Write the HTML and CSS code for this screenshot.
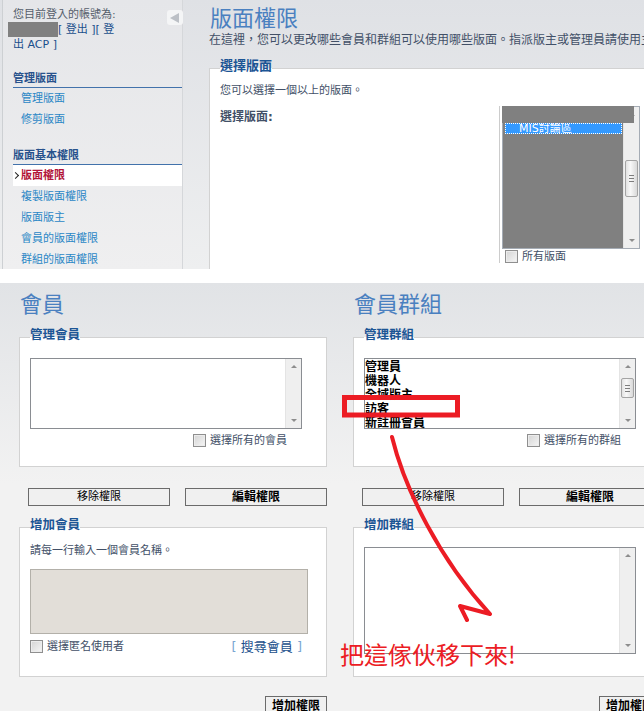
FILE: index.html
```html
<!DOCTYPE html>
<html lang="zh-Hant">
<head>
    <meta charset="UTF-8">
    <meta name="viewport" content="width=device-width, initial-scale=1.0">
    <title>版面權限</title>
    <link rel="stylesheet" href="styles.css">
</head>
<body>
    <!-- Forum permissions: pick forums -->
    <div class="shot shot-acp">
        <div class="menu">
            <span class="menu-toggle"></span>
            <div class="menu-user">
                <p>您目前登入的帳號為:</p>
                <p><span class="redacted user-name"></span><a href="#">[ 登出 ]</a><a href="#">[ 登出 ACP ]</a></p>
            </div>

            <div class="menu-block">
                <h3>管理版面</h3>
                <ul>
                    <li><a href="#">管理版面</a></li>
                    <li><a href="#">修剪版面</a></li>
                </ul>
            </div>

            <div class="menu-block">
                <h3>版面基本權限</h3>
                <ul>
                    <li class="active"><a href="#">版面權限</a></li>
                    <li><a href="#">複製版面權限</a></li>
                    <li><a href="#">版面版主</a></li>
                    <li><a href="#">會員的版面權限</a></li>
                    <li><a href="#">群組的版面權限</a></li>
                </ul>
            </div>
        </div>

        <div class="menu-gap"></div>

        <div class="main">
            <h1>版面權限</h1>
            <p class="explain">在這裡，您可以更改哪些會員和群組可以使用哪些版面。指派版主或管理員請使用主要的權限頁面。</p>

            <fieldset class="box box-forum">
                <legend>選擇版面</legend>
                <p>您可以選擇一個以上的版面。</p>
                <dl>
                    <dt>選擇版面:</dt>
                    <dd>
                        <div class="select-forum">
                            <div class="select-list">
                                <div class="option selected">MIS討論區</div>
                            </div>
                            <div class="scrollbar">
                                <span class="arrow up"></span>
                                <span class="thumb forum-thumb"><i></i><i></i><i></i></span>
                                <span class="arrow down"></span>
                            </div>
                            <span class="redacted select-cover"></span>
                        </div>
                        <label class="check forum-all"><span class="checkbox"></span>所有版面</label>
                    </dd>
                </dl>
            </fieldset>
        </div>
    </div>

    <!-- Forum permissions: users and groups -->
    <div class="shot shot-perm">
        <div class="perm-grid">
            <h2>會員</h2>
            <h2>會員群組</h2>

            <fieldset class="box">
                <legend>管理會員</legend>
                <div class="listbox">
                    <ul class="listbox-items"></ul>
                    <div class="scrollbar">
                        <span class="arrow up"></span>
                        <span class="arrow down"></span>
                    </div>
                </div>
                <div class="check-row">
                    <label class="check"><span class="checkbox"></span>選擇所有的會員</label>
                </div>
            </fieldset>

            <fieldset class="box">
                <legend>管理群組</legend>
                <div class="listbox">
                    <ul class="listbox-items group-list">
                        <li>管理員</li>
                        <li>機器人</li>
                        <li>全域版主</li>
                        <li>訪客</li>
                        <li>新註冊會員</li>
                    </ul>
                    <div class="scrollbar">
                        <span class="arrow up"></span>
                        <span class="thumb group-thumb"><i></i><i></i><i></i></span>
                        <span class="arrow down"></span>
                    </div>
                </div>
                <div class="check-row">
                    <label class="check"><span class="checkbox"></span>選擇所有的群組</label>
                </div>
            </fieldset>

            <div class="button-row">
                <button class="button">移除權限</button>
                <button class="button strong">編輯權限</button>
            </div>
            <div class="button-row">
                <button class="button">移除權限</button>
                <button class="button strong">編輯權限</button>
            </div>

            <fieldset class="box">
                <legend>增加會員</legend>
                <p class="hint">請每一行輸入一個會員名稱。</p>
                <div class="textarea"></div>
                <div class="add-row">
                    <label class="check"><span class="checkbox"></span>選擇匿名使用者</label>
                    <a class="find-user" href="#"><span>[</span> 搜尋會員 <span>]</span></a>
                </div>
            </fieldset>

            <fieldset class="box">
                <legend>增加群組</legend>
                <div class="listbox listbox-tall">
                    <ul class="listbox-items"></ul>
                    <div class="scrollbar">
                        <span class="arrow up"></span>
                        <span class="arrow down"></span>
                    </div>
                </div>
            </fieldset>

            <div class="submit-row"><button class="button strong">增加權限</button></div>
            <div class="submit-row"><button class="button strong">增加權限</button></div>
        </div>
    </div>

    <!-- hand-drawn note on top -->
    <svg class="markup" width="644" height="711" viewBox="0 0 644 711">
        <rect x="344.5" y="397.5" width="113" height="17.5" fill="none" stroke="#ec1c24" stroke-width="5"/>
        <path d="M392 437 C405 490 440 560 490 614 L460 606 L467 620" fill="none" stroke="#ec1c24" stroke-width="4" stroke-linecap="round" stroke-linejoin="round"/>
    </svg>
    <p class="markup-note">把這傢伙移下來!</p>
</body>
</html>
```

FILE: styles.css
```css
* {
    box-sizing: border-box;
}

body {
    margin: 0;
    width: 644px;
    height: 711px;
    overflow: hidden;
    position: relative;
    background: #ffffff;
    font-family: "DejaVu Sans", "Noto Sans CJK TC", sans-serif;
    font-size: 11px;
    color: #425067;
}

p, h1, h2, h3, ul, dl, dd {
    margin: 0;
    padding: 0;
}

ul {
    list-style: none;
}

a {
    text-decoration: none;
}

.redacted {
    background: #808080;
}

/* ---------- top: select forums ---------- */

.shot-acp {
    display: flex;
    height: 269px;
    overflow: hidden;
    background: linear-gradient(#dfe1e5, #eeeff0);
}

.menu {
    position: relative;
    flex: 0 0 181px;
    margin-left: 2px;
    padding-left: 10px;
    border-left: 1px solid #cdd0d3;
    border-right: 1px solid #d5d7da;
    background: linear-gradient(#e5e6e9, #efeff0);
}

.menu-toggle {
    position: absolute;
    top: 10px;
    right: -1px;
    width: 16px;
    height: 15px;
    border-radius: 3px;
    background: #f4f5f6;
}

.menu-toggle::after {
    content: "";
    position: absolute;
    left: 3px;
    top: 3px;
    border-style: solid;
    border-width: 5px 9px 5px 0;
    border-color: transparent #bcc0c6 transparent transparent;
}

.menu-user {
    width: 108px;
    padding-top: 7px;
    line-height: 15px;
    color: #555e6b;
}

.menu-user a {
    color: #1a4f8c;
}

.user-name {
    display: inline-block;
    width: 50px;
    height: 15px;
    margin-left: -5px;
    vertical-align: top;
}

.menu-block h3 {
    margin-top: 19px;
    padding-bottom: 1px;
    font-size: 11px;
    line-height: 14px;
    color: #28528c;
    border-bottom: 1px solid #4272ab;
}

.menu-user + .menu-block h3 {
    margin-top: 20px;
}

.menu-block li {
    position: relative;
}

.menu-block li a {
    display: block;
    padding-left: 8px;
    line-height: 21px;
    color: #2b87c6;
}

.menu-block li.active {
    background: #ffffff;
}

.menu-block li.active a {
    color: #b2153a;
    font-weight: bold;
}

.menu-block li.active::before {
    content: "";
    position: absolute;
    left: 0;
    top: 8px;
    width: 4px;
    height: 4px;
    border-top: 1.5px solid #222;
    border-right: 1.5px solid #222;
    transform: rotate(45deg);
}

.menu-gap {
    flex: 0 0 26px;
}

.main {
    flex: 0 0 470px;
}

.main h1 {
    padding: 6px 0 0 1px;
    font-size: 22px;
    line-height: 26px;
    font-weight: normal;
    color: #4a80c0;
}

.explain {
    font-size: 12px;
    line-height: 16px;
    white-space: nowrap;
}

.box {
    margin: 0;
    padding: 0 10px;
    min-width: 0;
    border: 1px solid #d2d2d2;
    background: #ffffff;
}

.box legend {
    padding: 0 0 4px;
    font-size: 12.5px;
    line-height: 16px;
    font-weight: bold;
    color: #1c5595;
}

.box-forum {
    margin-top: 10px;
    padding-bottom: 20px;
}

.box-forum legend {
    font-size: 13px;
}

.box-forum p {
    margin-top: 5px;
    line-height: 16px;
}

.box-forum dl {
    display: flex;
    margin-top: 7px;
}

.box-forum dt {
    width: 279px;
    padding-top: 3px;
    font-size: 12px;
    line-height: 16px;
    font-weight: bold;
}

.box-forum dd {
    padding-left: 2px;
    border-left: 1px solid #cccccc;
}

.select-forum {
    position: relative;
    display: flex;
    width: 138px;
    height: 143px;
    border: 1px solid #a5acb5;
}

.select-list {
    flex: 1;
    padding: 16px 1px 0 2px;
    background: #808080;
}

.option.selected {
    height: 11px;
    padding-left: 14px;
    font-size: 11px;
    line-height: 11px;
    color: #ffffff;
    background: #3399ff;
    outline: 1px dotted #ffffff;
    outline-offset: -1px;
}

.select-cover {
    position: absolute;
    left: -1px;
    top: -1px;
    width: 132px;
    height: 17px;
}

.forum-all {
    margin: 1px 0 0 3px;
}

/* ---------- shared widgets ---------- */

.scrollbar {
    display: flex;
    flex-direction: column;
    width: 16px;
    background: #efefef;
    border-left: 1px solid #e4e4e4;
}

.arrow {
    position: relative;
    height: 15px;
}

.arrow::after {
    content: "";
    position: absolute;
    left: 5px;
    border-style: solid;
    border-color: transparent;
}

.arrow.up::after {
    top: 6px;
    border-width: 0 3px 3px;
    border-bottom-color: #8d8d8d;
}

.arrow.down {
    margin-top: auto;
}

.arrow.down::after {
    top: 6px;
    border-width: 3px 3px 0;
    border-top-color: #8d8d8d;
}

.thumb {
    display: flex;
    flex-direction: column;
    justify-content: center;
    gap: 2px;
    margin: 0 1px;
    border: 1px solid #a4a4a4;
    border-radius: 2px;
    background: linear-gradient(90deg, #e2e2e2, #f8f8f8 40%, #d9d9d9);
}

.thumb i {
    display: block;
    height: 1px;
    margin: 0 3px;
    background: #7d7d7d;
}

.forum-thumb {
    height: 37px;
    margin-top: 38px;
}

.group-thumb {
    height: 20px;
    margin-top: 4px;
}

.check {
    display: flex;
    align-items: center;
    gap: 4px;
    line-height: 13px;
    color: #425067;
}

.checkbox {
    width: 13px;
    height: 13px;
    border: 1px solid #8f8f8f;
    background: linear-gradient(135deg, #d4d4d4, #f6f6f6);
    box-shadow: inset 0 0 0 1px #ececec;
}

/* ---------- bottom: users and groups ---------- */

.shot-perm {
    margin-top: 14px;
    height: 428px;
    overflow: hidden;
    background: linear-gradient(#e1e3e6, #f2f2f2 200px);
}

.perm-grid {
    display: grid;
    grid-template-columns: 308px 308px;
    column-gap: 26px;
    padding-left: 19px;
}

.perm-grid h2 {
    padding: 9px 0 0 1px;
    font-size: 22px;
    line-height: 26px;
    font-weight: normal;
    color: #4a80c0;
}

.perm-grid .box {
    margin-top: 9px;
    padding-bottom: 19px;
}

.listbox {
    display: flex;
    width: 272px;
    height: 71px;
    margin-top: 11px;
    border: 1px solid #8a8d92;
    background: #ffffff;
}

.listbox-items {
    flex: 1;
    padding-top: 1px;
}

.group-list li {
    font-size: 12px;
    line-height: 14px;
    font-weight: bold;
    color: #000000;
    white-space: nowrap;
}

.check-row {
    display: flex;
    justify-content: flex-end;
    width: 272px;
    margin-top: 5px;
    padding-right: 15px;
}

.button-row {
    display: flex;
    gap: 15px;
    margin-top: 21px;
    padding-left: 9px;
}

.button {
    width: 142px;
    height: 18px;
    padding: 0;
    font-family: inherit;
    font-size: 11px;
    line-height: 16px;
    color: #000000;
    background: #f0f0f0;
    border: 1px solid #6b6b6b;
}

.button.strong {
    font-size: 12px;
    font-weight: bold;
}

.perm-grid .button-row + .button-row + .box,
.perm-grid .button-row + .button-row + .box + .box {
    margin-top: 11px;
    padding-bottom: 22px;
}

.hint {
    margin-top: 6px;
    line-height: 16px;
}

.textarea {
    width: 278px;
    height: 65px;
    margin-top: 10px;
    border: 1px solid #b3b0a9;
    background: #e2ded8;
}

.add-row {
    display: flex;
    justify-content: space-between;
    align-items: center;
    width: 272px;
    margin-top: 5px;
}

.find-user {
    font-size: 13px;
    line-height: 15px;
    color: #1a4f8c;
}

.find-user span {
    color: #7aa6d2;
}

.listbox-tall {
    height: 107px;
    margin-top: 10px;
}

.submit-row {
    display: flex;
    justify-content: flex-end;
    margin-top: 19px;
}

.submit-row .button {
    width: 62px;
    height: 20px;
}

/* ---------- red note ---------- */

.markup {
    position: absolute;
    left: 0;
    top: 0;
    pointer-events: none;
}

.markup-note {
    position: absolute;
    left: 340px;
    top: 640px;
    font-family: "Noto Sans CJK TC", sans-serif;
    font-size: 24px;
    line-height: 28px;
    color: #ec1c24;
}
```
